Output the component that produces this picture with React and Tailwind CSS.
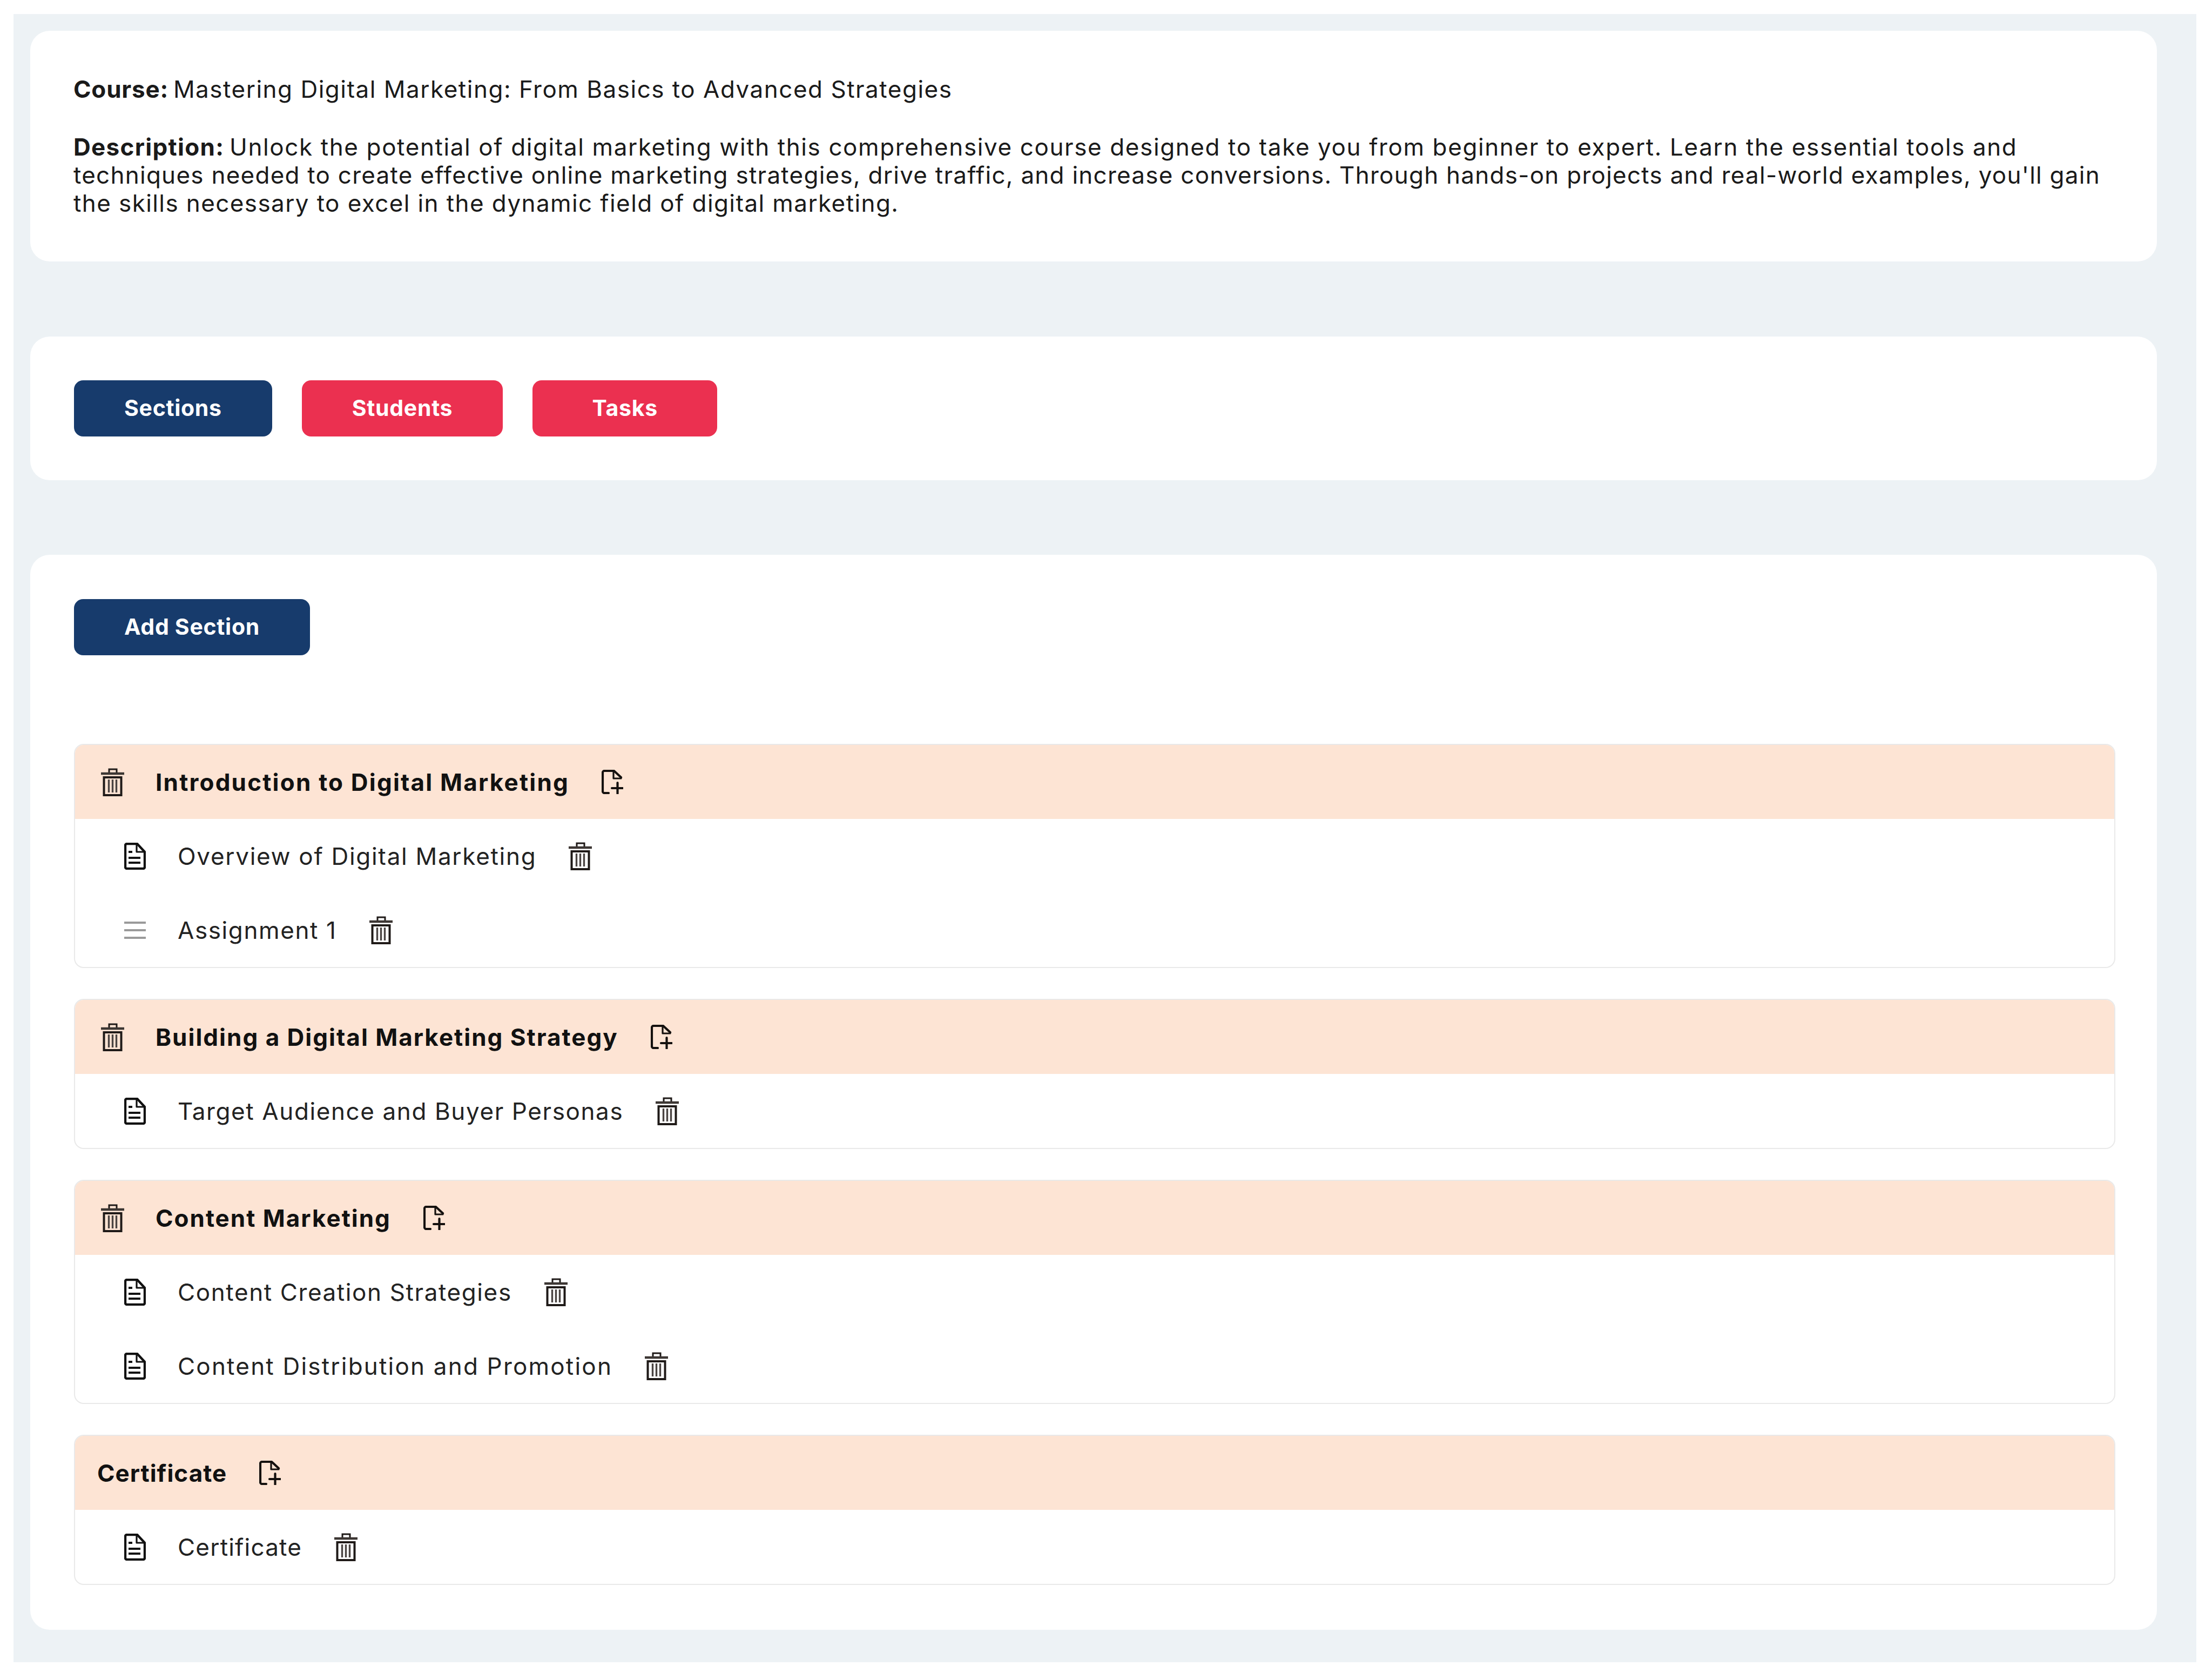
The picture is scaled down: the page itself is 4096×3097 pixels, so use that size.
const sections = [
  { title: 'Introduction to Digital Marketing', titleClass: 'tracking-[2.2px]', trash: true, rows: [
    { text: 'Overview of Digital Marketing', textClass: 'tracking-[1.7px]' },
    { text: 'Assignment 1', menu: true },
  ] },
  { title: 'Building a Digital Marketing Strategy', titleClass: 'tracking-[2px]', trash: true, rows: [{ text: 'Target Audience and Buyer Personas' }] },
  { title: 'Content Marketing', titleClass: 'tracking-[2px]', trash: true, rows: [
    { text: 'Content Creation Strategies' },
    { text: 'Content Distribution and Promotion', textClass: 'tracking-[2.2px]' },
  ] },
  { title: 'Certificate', titleClass: 'tracking-[1px]', rows: [{ text: 'Certificate', textClass: 'tracking-[1.2px]' }] },
];

function TrashIcon() {
  return (
    <svg viewBox="0 0 43 52" className="w-[43px] h-[52px] shrink-0" fill="none" stroke="#1f1a18">
      <path d="M15 8.5V2h14v6.5" strokeWidth="3" />
      <path d="M0 10h43" strokeWidth="4.5" stroke="#3c3633" />
      <rect x="5.5" y="17" width="32" height="33" strokeWidth="4" />
      <path d="M14.5 21v24M21.5 21v24M28.5 21v24" strokeWidth="3.4" stroke="#4a4442" />
    </svg>
  );
}

function DocIcon() {
  return (
    <svg viewBox="0 0 40 50" className="w-[40px] h-[50px] shrink-0" fill="none" stroke="#111" strokeWidth="4.4" strokeLinejoin="round">
      <path d="M5 2h19l14 15v28a3 3 0 0 1-3 3H5a3 3 0 0 1-3-3V5a3 3 0 0 1 3-3z" />
      <path d="M23 3v14h14" strokeWidth="3.2" />
      <path d="M8 17h7M8 28h22M8 37h22" strokeWidth="4.2" />
    </svg>
  );
}

function AddFileIcon() {
  return (
    <svg viewBox="0 0 40 45" className="w-[40px] h-[45px] shrink-0" fill="none" stroke="#15110f" strokeWidth="4.2" strokeLinejoin="round" strokeLinecap="round">
      <path d="M13 43H5a3 3 0 0 1-3-3V5a3 3 0 0 1 3-3h18l13 12" />
      <path d="M22 3v13h14" strokeWidth="3.2" />
      <path d="M29.5 24v20M19 34h20" />
    </svg>
  );
}

function MenuIcon() {
  return (
    <svg viewBox="0 0 40 50" className="w-[40px] h-[50px] shrink-0" fill="none" stroke="#9a9a9a" strokeWidth="4">
      <path d="M0 11h40M0 25h40M0 39h40" />
    </svg>
  );
}

function Btn({ children, red }) {
  return (
    <button className={`h-[104px] min-w-[342px] px-[93px] rounded-[17px] text-white text-[41px] font-bold tracking-[0.7px] ${red ? 'bg-[#eb3050]' : 'bg-[#173b6c]'}`}>
      {children}
    </button>
  );
}

function Section({ title, titleClass, trash, rows }) {
  return (
    <div className="rounded-[18px] border-2 border-[#e9e9e9] overflow-hidden">
      <div className="h-[137px] bg-[#fde4d4] flex items-center pl-[41px] gap-[58px]">
        {trash && <span className="ml-[7px] flex"><TrashIcon /></span>}
        <div className="flex items-center gap-[60px]">
          <span className={`text-[44px] font-bold text-[#111] ${titleClass}`}>{title}</span>
          <AddFileIcon />
        </div>
      </div>
      {rows.map((r) => (
        <div key={r.text} className="h-[137px] flex items-center pl-[91px] gap-[59px]">
          {r.menu ? <MenuIcon /> : <DocIcon />}
          <div className="flex items-center gap-[60px]">
            <span className={`text-[44px] text-[#222] ${r.textClass || 'tracking-[1.6px]'}`}>{r.text}</span>
            <TrashIcon />
          </div>
        </div>
      ))}
    </div>
  );
}

export default function App() {
  return (
    <div className="min-h-[3097px] bg-white pl-[25px] pr-[29px] pt-[26px] pb-[20px] font-[Inter,sans-serif]">
      <div className="bg-[#edf2f5] pl-[31px] pr-[73px] pt-[31px] pb-[60px]">
        <div className="bg-white rounded-[36px] pl-[80px] pr-[77px] pt-[82px] pb-[82px] text-[44px] leading-[52px] text-[#1a1a1a] tracking-[1.55px]">
          <p className="mb-[55px] tracking-[1.5px]"><b className="font-bold tracking-[0.8px] mr-[-5px]">Course:</b> Mastering Digital Marketing: From Basics to Advanced Strategies</p>
          <p>
            <span className="block whitespace-nowrap tracking-[1.6px]"><b className="font-bold tracking-[1.3px] mr-[-4px]">Description:</b> Unlock the potential of digital marketing with this comprehensive course designed to take you from beginner to expert. Learn the essential tools and</span>
            <span className="block whitespace-nowrap tracking-[1.25px]">techniques needed to create effective online marketing strategies, drive traffic, and increase conversions. Through hands-on projects and real-world examples, you'll gain</span>
            <span className="block whitespace-nowrap tracking-[1.4px]">the skills necessary to excel in the dynamic field of digital marketing.</span>
          </p>
        </div>

        <div className="mt-[139px] bg-white rounded-[36px] pl-[81px] pr-[77px] py-[81px] flex gap-[55px]">
          <Btn>Sections</Btn>
          <Btn red>Students</Btn>
          <Btn red>Tasks</Btn>
        </div>

        <div className="mt-[138px] bg-white rounded-[36px] pl-[81px] pr-[77px] pt-[82px] pb-[83px]">
          <Btn>Add Section</Btn>
          <div className="mt-[164px] flex flex-col gap-[57px]">
            {sections.map((s) => <Section key={s.title} {...s} />)}
          </div>
        </div>
      </div>
    </div>
  );
}
